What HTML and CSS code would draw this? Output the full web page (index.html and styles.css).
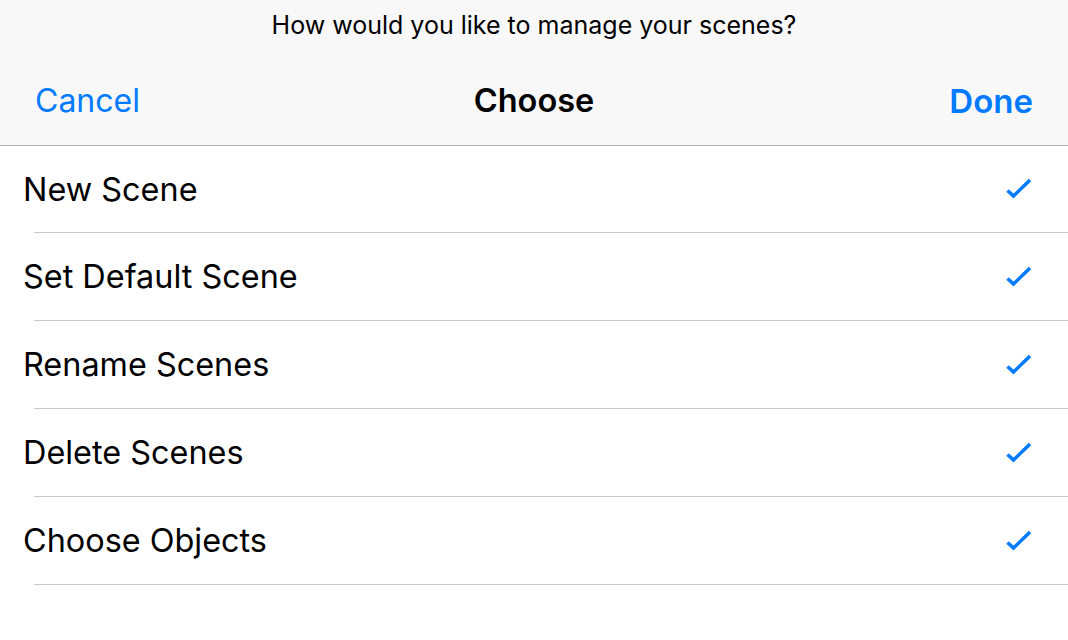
FILE: index.html
```html
<!DOCTYPE html>
<html>
<head>
<meta charset="utf-8">
<link rel="stylesheet" href="styles.css">
</head>
<body>
<div class="sheet">
  <header class="header">
    <div class="prompt">How would you like to manage your scenes?</div>
    <div class="nav">
      <span class="nav-btn cancel">Cancel</span>
      <span class="nav-title">Choose</span>
      <span class="nav-btn done">Done</span>
    </div>
  </header>
  <ul class="list">
    <li class="row"><div class="row-content"><span class="label">New Scene</span><svg class="check" width="28" height="22" viewBox="0 0 28 22"><path d="M2.5 12.5 L8.5 18 L25 2" fill="none" stroke="#007aff" stroke-width="3.5"/></svg></div></li>
    <li class="row"><div class="row-content"><span class="label">Set Default Scene</span><svg class="check" width="28" height="22" viewBox="0 0 28 22"><path d="M2.5 12.5 L8.5 18 L25 2" fill="none" stroke="#007aff" stroke-width="3.5"/></svg></div></li>
    <li class="row"><div class="row-content"><span class="label">Rename Scenes</span><svg class="check" width="28" height="22" viewBox="0 0 28 22"><path d="M2.5 12.5 L8.5 18 L25 2" fill="none" stroke="#007aff" stroke-width="3.5"/></svg></div></li>
    <li class="row"><div class="row-content"><span class="label">Delete Scenes</span><svg class="check" width="28" height="22" viewBox="0 0 28 22"><path d="M2.5 12.5 L8.5 18 L25 2" fill="none" stroke="#007aff" stroke-width="3.5"/></svg></div></li>
    <li class="row"><div class="row-content"><span class="label">Choose Objects</span><svg class="check" width="28" height="22" viewBox="0 0 28 22"><path d="M2.5 12.5 L8.5 18 L25 2" fill="none" stroke="#007aff" stroke-width="3.5"/></svg></div></li>
  </ul>
</div>
</body>
</html>
```
FILE: styles.css
```css
html, body {
  margin: 0;
  padding: 0;
  background: #ffffff;
}
body {
  font-family: Inter, "Noto Sans", "Liberation Sans", sans-serif;
  color: #000;
  width: 1068px;
  height: 640px;
  overflow: hidden;
}
.header {
  background: #f8f8f8;
  height: 145px;
  border-bottom: 1px solid #b2b2b2;
  display: flex;
  flex-direction: column;
}
.prompt {
  height: 50px;
  line-height: 50px;
  text-align: center;
  font-size: 25px;
}
.nav {
  flex: 1;
  display: grid;
  grid-template-columns: 1fr auto 1fr;
  align-items: center;
  padding: 6px 35px 0 35px;
  font-size: 32px;
}
.nav-btn {
  color: #007aff;
}
.cancel {
  justify-self: start;
}
.done {
  justify-self: end;
  font-weight: 600;
  font-size: 33px;
}
.nav-title {
  font-weight: 600;
  font-size: 32.5px;
}
.list {
  list-style: none;
  margin: 0;
  padding: 0;
}
.row {
  display: flex;
  flex-direction: column;
}
.row::after {
  content: "";
  display: block;
  height: 1px;
  margin-left: 34px;
  background: #c8c7cc;
}
.row-content {
  height: 87px;
  display: flex;
  align-items: center;
  justify-content: space-between;
  padding: 0 35px 0 23px;
  font-size: 32.4px;
}
.row:first-child .row-content {
  height: 86px;
}
.check {
  display: block;
}
```
